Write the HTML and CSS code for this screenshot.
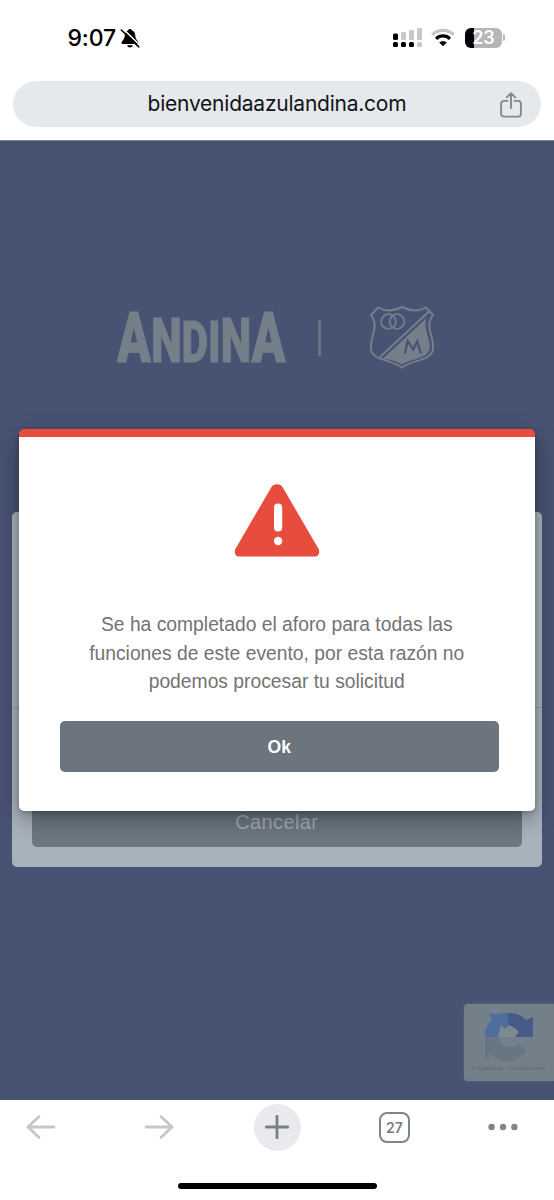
FILE: index.html
```html
<!DOCTYPE html>
<html lang="es">
<head>
<meta charset="utf-8">
<meta name="viewport" content="width=device-width">
<title>bienvenidaazulandina.com</title>
<link rel="stylesheet" href="styles.css">
</head>
<body>
<header class="browser-top">
  <div class="status">
    <div class="clock"><span>9:07</span>
      <svg class="bell" width="20" height="21" viewBox="0 0 20 21"><path d="M1.500 14.900c0-2 2.700-2.700 3.100-6.400C4.900 4.800 6.200 3 8.200 2.300 8.500.6 11.500.6 11.800 2.300 14 3 15.100 5 15.400 8.500c.4 3.700 3.100 4.400 3.100 6.400 0 .7-.4 1.100-1.100 1.100H2.600c-.7 0-1.100-.4-1.100-1.100z"/><path d="M7.200 17.300h5.600c-.3 3-5.300 3-5.600 0z"/><path d="M2.700.5 20 17.200" stroke="#fff" stroke-width="1.500"/><path d="M1.300 2 18.800 18.800" stroke="#000" stroke-width="1.600" stroke-linecap="round"/></svg>
    </div>
    <div class="signals">
      <svg width="29" height="21" viewBox="0 0 29 21"><g fill="#c8c8c8"><rect x="8" y="5" width="5" height="8" rx="1.300"/><rect x="16" y="3" width="5" height="10" rx="1.300"/><rect x="24" y="1" width="5" height="12" rx="1.300"/><rect x="24" y="15" width="5" height="5" rx="1.500"/></g><rect y="6.500" width="5" height="6.500" rx="1.500"/><rect y="15" width="5" height="5" rx="1.500"/><rect x="8" y="15" width="5" height="5" rx="1.500"/><rect x="16" y="15" width="5" height="5" rx="1.500"/></svg>
      <svg class="wifi" width="24" height="19" viewBox="0 0 24 19" fill="none" stroke-width="3.200"><path d="M1.200 6.800a15.300 15.300 0 0 1 21.600 0" stroke="#c6c6c6"/><path d="M5.100 10.800a9.800 9.800 0 0 1 13.800 0" stroke="#000"/><path d="M12 18.200 8.200 14.500a5.400 5.400 0 0 1 7.600 0z" fill="#000"/></svg>
      <div class="battery"><span>23</span></div><i class="battery-tip"></i>
    </div>
  </div>
  <div class="address"><span>bienvenidaazulandina.com</span>
    <svg class="share" width="22" height="26" viewBox="0 0 22 26" fill="none" stroke="#85898d" stroke-width="1.900" stroke-linecap="round" stroke-linejoin="round"><path d="M7.500 8.900H4a2.900 2.900 0 0 0-2.900 2.900v9.900A2.900 2.900 0 0 0 4 24.600h14a2.900 2.900 0 0 0 2.900-2.900v-9.900A2.900 2.900 0 0 0 18 8.900h-3.500M11 16V1.500M6.800 5.400 11 1.200l4.200 4.200"/></svg>
  </div>
</header>
<main class="page">
  <div class="brands">
    <svg class="andina" width="180" height="100" viewBox="0 0 180 100"><text transform="translate(3 74) scale(.71 1)"><tspan class="tall">A</tspan><tspan class="mid">N</tspan><tspan class="short">DI</tspan><tspan class="mid">N</tspan><tspan class="tall">A</tspan></text></svg>
    <i class="divider"></i>
    <svg class="crest" width="66" height="66" viewBox="0 0 66 66" fill="none" stroke="#748089" stroke-width="2"><path d="M9 2.500C16 6.500 25 6 33 2c8 4 17 4.500 24 .5L64 10c-9 12 1.500 22 0 34-1.500 12-19 10-31 18.500C21 54 3.500 56 2 44 .5 32 11 22 2 10z"/><path d="M10 53 60 6.500"/><path d="M13.500 54 57.500 13c-4 11 5 22 3 31-2 10-17 9-27.500 15.500-5-3-11-5.500-19.500-5.500z" fill="#748089" stroke="none"/><circle cx="19.500" cy="16.500" r="7.400" stroke-width="1.800"/><circle cx="28" cy="16.500" r="7.400" stroke-width="1.800"/><path d="m35.800 48.500 3-12.500 5.400 8.500 4-8.500 3.600 12.500" stroke="#485273" stroke-width="2.200"/></svg>
  </div>
  <section class="card"><hr><div class="cancel">Cancelar</div></section>
  <aside class="captcha">
    <svg width="50" height="50" viewBox="0 0 50 50"><path fill="#7d8991" d="m14 18 5-6 9 2 6 4-2 7-18 1z"/><path fill="#4f6d9f" d="M5 1c3 1 6 1.500 9 1.200C17 1.200 20 1 24 1v13l-3 3-4-4-2 4 2 1c-2 1-3 4-3 7H1c0-8 2-13 7-17z"/><path fill="#475b89" d="M24 1c8 0 14 2 18 7l7-3v20H31l4-5c-3-3-6-6-11-7z"/><path fill="#687681" d="M1 25h13c2 7 6 10 12 10 4 0 6-1 8-3l9 7C33 52 17 52 7 42l-6 6z"/></svg>
    <div class="legal">Privacidad - Condiciones</div>
  </aside>
  <div class="modal" role="dialog">
    <svg class="warning" width="86" height="73" viewBox="0 0 86 73"><path fill="#e74c3c" d="M37.200 3.500C39.500-.7 46.500-.7 48.800 3.500L84.300 64.500C86.500 68 84.500 72.500 81.500 72.500H4.500C1.500 72.500-.5 68 1.700 64.500z"/><rect x="40" y="19.500" width="8.200" height="28" rx="4" fill="#fff"/><circle cx="44.100" cy="57" r="4.200" fill="#fff"/></svg>
    <p>Se ha completado el aforo para todas las<br>funciones de este evento, por esta razón no<br>podemos procesar tu solicitud</p>
    <button>Ok</button>
  </div>
</main>
<footer class="toolbar">
  <nav>
    <svg width="30" height="24" viewBox="0 0 30 24" class="arrow back"><path d="M28 12H2M13 1.500 2 12l11 10.500"/></svg>
    <svg width="30" height="24" viewBox="0 0 30 24" class="arrow forward"><path d="M2 12h26M17 1.500 28 12 17 22.500"/></svg>
    <div class="plus"><svg width="24" height="24" viewBox="0 0 24 24"><path d="M12 1.200v21.600M1.200 12h21.600" stroke="#7c8084" stroke-width="2.800" stroke-linecap="round"/></svg></div>
    <div class="tabs">27</div>
    <svg class="more" width="30" height="8" viewBox="0 0 30 8" fill="#7f8588"><circle cx="3.600" cy="4" r="3.200"/><circle cx="15" cy="4" r="3.200"/><circle cx="26.400" cy="4" r="3.200"/></svg>
  </nav>
  <div class="home"></div>
</footer>
</body>
</html>
```
FILE: styles.css
```css
* { box-sizing: border-box; }
body { margin: 0; width: 554px; height: 1200px; overflow: hidden; background: #fff; font-family: "Liberation Sans", Arial, sans-serif; }
svg { display: block; flex-shrink: 0; }
.browser-top { height: 140px; padding: 0 13px; }
.status { height: 81px; display: flex; justify-content: space-between; padding: 27px 36px 0 54.500px; }
.clock { display: flex; height: 22px; align-items: center; gap: 4px; font: 500 23px/22px Inter, sans-serif; letter-spacing: -.15px; }
.bell { margin-top: 1px; }
.signals { display: flex; height: 21px; align-items: center; }
.wifi { margin-left: 9px; }
.battery { width: 37px; height: 20px; margin-left: 10px; border-radius: 6px; background: linear-gradient(90deg, #000 9px, #b6b6b6 9px); color: #fff; text-align: center; font: 600 18px/20px Inter, sans-serif; }
.battery-tip { width: 2px; height: 7px; margin-left: 1px; border-radius: 0 2px 2px 0; background: #b6b6b6; }
.address { height: 46px; border-radius: 23px; background: #e6e9ec; display: grid; grid-template-columns: 50px 1fr 50px; align-items: center; color: #111416; font: 400 21px/46px Inter, sans-serif; }
.address span { grid-column: 2; text-align: center; letter-spacing: -.23px; }
.share { margin-left: 9px; margin-top: 2px; }
.page { position: relative; height: 959.500px; padding: 164px 11.500px 0; background: #485273; border-top: 1px solid #7e859b; }
.brands { height: 66px; padding-left: 102.500px; display: flex; align-items: center; }
.andina { fill: #748089; stroke: #748089; stroke-width: 1; font-family: Roboto, sans-serif; font-weight: 900; letter-spacing: .4px; }
.tall { font-size: 70px; }
.mid { font-size: 61px; }
.short { font-size: 57px; }
.divider { width: 3px; height: 36px; margin-left: 24px; border-radius: 1px; background: #687480; }
.crest { margin-left: 47.500px; }
.card { width: 530.500px; height: 355px; margin-top: 141px; padding: 195px 20px 0; border-radius: 5px; background: #a8b2bb; }
.card hr { height: 1px; margin: 0 -20px 87px; border: 0; background: #919ca5; }
.cancel { height: 51.500px; border-radius: 5px; background: #6c7782; color: #a2acb4; font-size: 20px; line-height: 54px; text-align: center; letter-spacing: .4px; }
.captcha { position: absolute; top: 863px; right: 0; width: 90.500px; height: 77px; padding: 8px 0 0 20px; border-radius: 4px 0 0 4px; background: #748089; box-shadow: 0 0 4px #566177; }
.legal { width: 90px; margin: 2px 0 0 -20px; color: #58666f; font-size: 6px; line-height: 8px; text-align: center; letter-spacing: .27px; }
.modal { position: absolute; left: 19px; top: 288px; width: 515.500px; height: 382px; padding: 47px 36px 0 41px; border-top: 8px solid #e74c3c; border-radius: 5px; background: #fff; box-shadow: 0 8px 22px rgba(0, 0, 0, .34), 0 2px 5px rgba(0, 0, 0, .2); }
.warning { margin: 0 auto 54px 174px; }
.modal p { margin: 0 0 24px -5px; color: #737373; font-size: 19.300px; line-height: 28.500px; text-align: center; }
.modal button { display: block; width: 438.500px; height: 51.500px; padding: 1px 0 0; border: 0; border-radius: 5px; background: #6c757d; color: #fff; font: 700 17.500px/51px "Liberation Sans", Arial, sans-serif; }
.toolbar { height: 100px; padding: 4px 0 0 26px; }
.toolbar nav { height: 47px; display: flex; align-items: center; }
.arrow { fill: none; stroke: #c7c7c7; stroke-width: 2.800; stroke-linecap: round; stroke-linejoin: round; }
.forward { margin-left: 88px; }
.plus { width: 47px; height: 47px; margin-left: 79.500px; display: grid; place-items: center; border-radius: 50%; background: #e8eaed; }
.tabs { width: 31px; height: 31px; margin-left: 78.500px; border: 2.500px solid #808487; border-radius: 8px; color: #777c80; text-align: center; font: 600 14px/27px Inter, sans-serif; }
.more { margin-left: 78px; }
.home { width: 199px; height: 6px; margin: 32.500px auto 0 152px; border-radius: 3px; background: #000; }
```
